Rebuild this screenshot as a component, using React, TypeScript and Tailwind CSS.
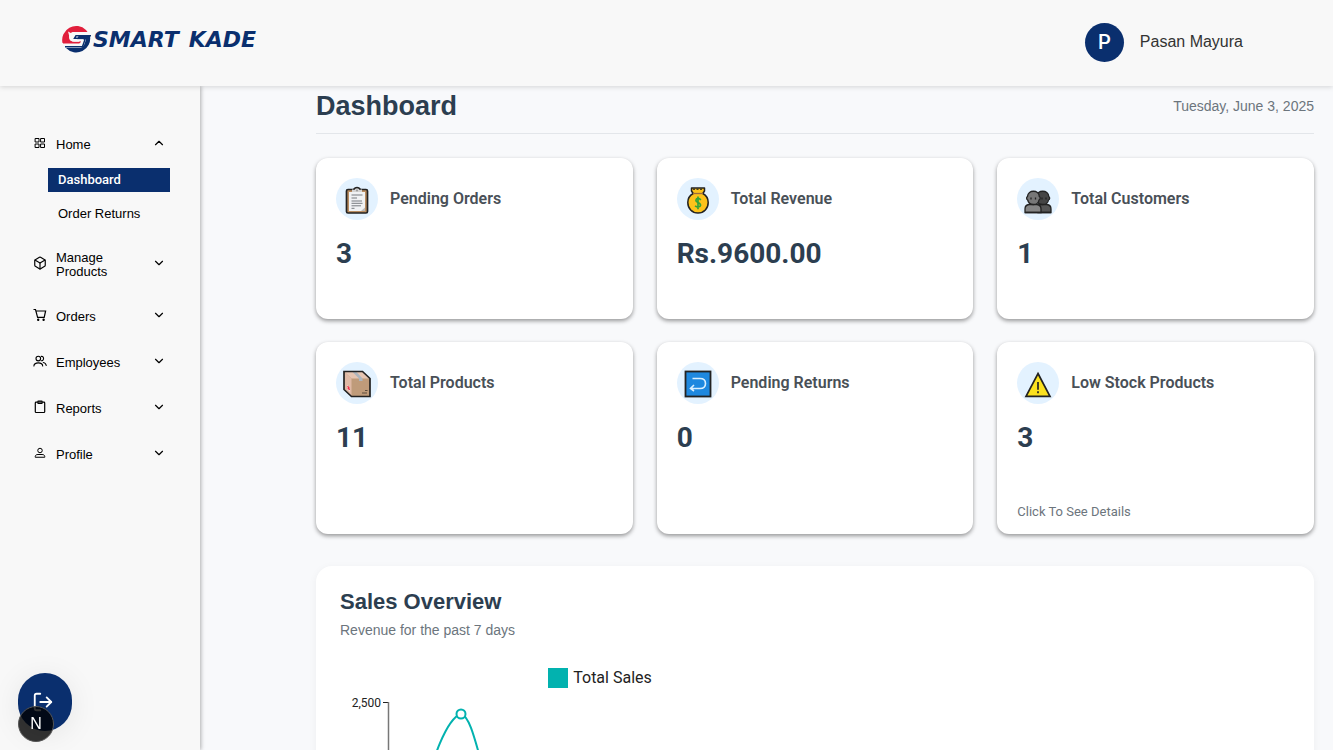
import React from "react";
import { FiGrid, FiBox } from "react-icons/fi";
import { ChevronDown, ChevronUp, LogOut } from "lucide-react";

function LogoMark() {
  return (
    <svg viewBox="0 0 32 30" className="h-[30px] w-8 shrink-0" aria-hidden="true">
      <path d="M1.500 18A14 14 0 0 1 25 5L26.500 7H12Q8 8 8 12Q8 16 12 16.500H20V18Z" fill="#e11f3c" />
      <path d="M5 23H19.500Q22.500 22 23.500 19L25 14.500H16L17.500 11H29A14 14 0 0 1 5 23Z" fill="#0a2f6e" />
      <path d="M31 8.300H13.500Q10 8.300 10 12Q10 15.500 13.500 15.500H20.500L18.500 19.700H1" fill="none" stroke="#f8f8f8" strokeWidth="2.600" />
      <path d="M30 10.700H15L13.500 13.300H22.500Q24.500 13.300 23.500 16L21.500 21.700H4" fill="none" stroke="#0a2f6e" strokeWidth="1.500" />
      <path d="M2 18H18L19.500 16.500" fill="none" stroke="#e11f3c" strokeWidth="1.200" />
      <path d="M7 6.500L12.500 9.500L8.500 12Z" fill="#f8f8f8" />
    </svg>
  );
}

function ProfileIcon() {
  return (
    <svg viewBox="0 0 24 24" className="size-3" fill="none" stroke="currentColor" strokeWidth="2" aria-hidden="true">
      <circle cx="12" cy="7" r="4.500" />
      <path d="M2.500 20.500V19C2.500 16 5.500 15 8 15H16C18.500 15 21.500 16 21.500 19V20.500Z" strokeLinejoin="round" />
    </svg>
  );
}

function CartIcon() {
  return (
    <svg viewBox="0 0 14 14" className="size-3.5" fill="none" stroke="currentColor" strokeWidth="1.200" aria-hidden="true">
      <path d="M0.500 1.500H2.500L4.600 9.300H11.200L12.600 3H3.200" />
      <circle cx="5.200" cy="11.800" r="0.600" fill="currentColor" />
      <circle cx="10.600" cy="11.800" r="0.600" fill="currentColor" />
    </svg>
  );
}

function TeamIcon() {
  return (
    <svg viewBox="0 0 14 14" className="size-3.5" fill="none" stroke="currentColor" strokeWidth="1.100" strokeLinecap="round" aria-hidden="true">
      <circle cx="5.300" cy="4.600" r="2.300" />
      <path d="M8.300 2.400C11.300 2.100 11.300 7 8.300 6.800M0.900 12C1.100 7.800 9.500 7.800 9.700 12M10.300 8.500C12 8.800 13 10 13.200 11.500" />
    </svg>
  );
}

function ReportIcon() {
  return (
    <svg viewBox="0 0 14 14" className="size-3.5" fill="none" stroke="currentColor" strokeWidth="1.200" aria-hidden="true">
      <path d="M4.500 2.200H3.100Q2.300 2.200 2.300 3V11.700Q2.300 12.500 3.100 12.500H10.900Q11.700 12.500 11.700 11.700V3Q11.700 2.200 10.900 2.200H9.500" />
      <rect x="4.800" y="1.200" width="4.400" height="2.200" rx="0.600" fill="#777" />
    </svg>
  );
}

const emoji = "size-[30px]";

function ClipboardArt() {
  return (
    <svg viewBox="0 0 30 30" className={emoji} aria-hidden="true">
      <rect x="4.500" y="4.500" width="21" height="23.500" rx="1.500" fill="#b98d61" stroke="#222" strokeWidth="1.700" />
      <path d="M7 7H23V26H7Z" fill="#f0f2f4" />
      <path d="M19 26L23 22.500V26Z" fill="#b9b9b9" />
      <path d="M10 7V4.500H12.500Q13 2.500 15 2.500Q17 2.500 17.500 4.500H20V7Z" fill="#d5d5d5" />
      <path d="M11.500 4.500Q13 2.500 15 2.500Q17 2.500 18.500 4.500" fill="none" stroke="#222" strokeWidth="1.400" />
      <circle cx="15" cy="5.500" r="1" fill="#999" />
      <path d="M9.500 10H20.500M9.500 13H15M9.500 16H20M9.500 18.300H20.500M9.500 20.800H19M9.500 23.300H12.500" stroke="#777b80" strokeWidth="1" />
    </svg>
  );
}

function MoneyArt() {
  return (
    <svg viewBox="0 0 30 30" className={emoji} aria-hidden="true">
      <path d="M8.500 3H21.500V6L19.800 8.500C23 10.200 25.200 13.500 25.200 17.600C25.200 23.500 21 28 15 28S4.800 23.500 4.800 17.600C4.800 13.500 7 10.200 10.200 8.500L8.500 6Z" fill="#fcc21b" stroke="#222" strokeWidth="1.500" strokeLinejoin="round" />
      <path d="M10 8.500H20" stroke="#9b6a3c" strokeWidth="1.300" />
      <path d="M10 4.300H20" stroke="#222" strokeWidth="1" strokeDasharray="2 1.500" />
      <path d="M17.900 14.800Q15.500 12.600 13.500 14Q11.800 16 15 17.500Q18.700 19.200 17 21.300Q14.500 22.800 12.100 20.800M15 11.500V24.300" fill="none" stroke="#35a33a" strokeWidth="1.700" />
    </svg>
  );
}

function PeopleArt() {
  return (
    <svg viewBox="0 0 30 30" className={emoji} aria-hidden="true">
      <g stroke="#222" strokeWidth="1.300">
        <path d="M15 27.500V22Q15 19.500 18 19.500H24Q28 20 28 24V27.500Z" fill="#555" />
        <path d="M13.500 11.500C14 4.500 25.500 4.500 25.800 11.500C27 12 27 14.500 25.500 15C24.500 21 15 21 13.700 15Z" fill="#454545" />
        <path d="M2 27.500V24Q2 20 6 19.500H14Q18 20 18 24V27.500Z" fill="#858585" />
        <path d="M4.500 11.500C5 4.500 16 4.500 16.300 11.500C17.500 12 17.500 14.500 16 15C15 21 6 21 4.700 15C3.300 14.500 3.300 12 4.500 11.500Z" fill="#777" />
      </g>
      <path d="M2 27.500H28" stroke="#222" strokeWidth="1.500" />
      <path d="M8 12.500V14.500M12.500 12.500V14.500M19 12.500V14.500M23 12.500V14.500" stroke="#222" strokeWidth="1.300" />
    </svg>
  );
}

function PackageArt() {
  return (
    <svg viewBox="0 0 30 30" className={emoji} aria-hidden="true">
      <path d="M2 2.500H20.500L28 9.500V27.500H9.500L2 20.500Z" fill="#bf9b7a" />
      <path d="M2 2.500H20.500L28 9.500H9.500Z" fill="#e6c5b2" />
      <path d="M2 2.500L9.500 9.500V27.500L2 20.500Z" fill="#dfb9a5" />
      <path d="M10 2.500H14L20.500 9.500V12H17V9.500Z" fill="#adb5bd" />
      <path d="M5 16L8 19V23L5 20Z" fill="#f4dfdb" />
      <path d="M5.700 17L7.500 21M7.500 18.500L5.700 20" stroke="#ee3048" strokeWidth="1.300" />
      <path d="M23 21.500H25.500M20 24H25" stroke="#5d4d3d" strokeWidth="1.200" />
      <path d="M2 2.500H20.500L28 9.500V27.500H9.500L2 20.500Z" fill="none" stroke="#222" strokeWidth="1.700" />
    </svg>
  );
}

function ReturnArt() {
  return (
    <svg viewBox="0 0 30 30" className={emoji} aria-hidden="true">
      <rect x="2.500" y="2.500" width="25" height="25" fill="#1e88df" stroke="#222" strokeWidth="1.800" />
      <path d="M9.500 9.500H17Q22.500 9.500 22.500 14.500Q22.500 19.500 17 19.500H8M11 16L7.500 19.500L11 22" fill="none" stroke="#d9efff" strokeWidth="1.600" />
    </svg>
  );
}

function WarningArt() {
  return (
    <svg viewBox="0 0 30 30" className={emoji} aria-hidden="true">
      <path d="M15 4.500L27 27.300H3Z" fill="#fbe11f" stroke="#222" strokeWidth="1.700" />
      <path d="M15 13V20.800M15 22.300V24.300" stroke="#222" strokeWidth="1.700" />
    </svg>
  );
}

function NavItem({ icon, label, open = false, tall = false }: { icon: React.ReactNode; label: string; open?: boolean; tall?: boolean }) {
  return (
    <button type="button" aria-expanded={open} className={`flex w-full items-center text-left ${tall ? "h-[58px]" : "h-[46px]"}`}>
      <span className="flex w-6 shrink-0 items-center pb-1 pl-px">{icon}</span>
      <span className="w-20 text-[13px] leading-[14px]">{label}</span>
      <span className="ml-auto pb-1">
        {open ? <ChevronUp className="size-3.5" strokeWidth={2} /> : <ChevronDown className="size-3.5" strokeWidth={2} />}
      </span>
    </button>
  );
}

const cards = [
  { icon: <ClipboardArt />, label: "Pending Orders", value: "3" },
  { icon: <MoneyArt />, label: "Total Revenue", value: "Rs.9600.00" },
  { icon: <PeopleArt />, label: "Total Customers", value: "1" },
  { icon: <PackageArt />, label: "Total Products", value: "11" },
  { icon: <ReturnArt />, label: "Pending Returns", value: "0" },
  { icon: <WarningArt />, label: "Low Stock Products", value: "3", note: "Click To See Details" },
];

function Card({ icon, label, value, note }: { icon: React.ReactNode; label: string; value: string; note?: string }) {
  return (
    <article className="flex min-h-[161px] flex-col rounded-xl bg-white px-5 pt-5 pb-3 font-['Roboto',sans-serif] shadow-[0_2px_4px_rgba(0,0,0,0.4)]">
      <div className="flex items-center gap-3">
        <div className="flex size-[42px] items-center justify-center rounded-full bg-[#e3f2ff] pt-0.5">{icon}</div>
        <h2 className="text-base font-semibold text-[#495057]">{label}</h2>
      </div>
      <p className="mt-4 text-[28px] leading-9 font-bold text-[#2c3e50]">{value}</p>
      {note && <a href="#low-stock" className="mt-[46px] text-[13px] leading-5 text-[#6c757d]">{note}</a>}
    </article>
  );
}

export default function App() {
  return (
    <div className="flex h-screen flex-col overflow-hidden bg-[#f8f9fb] font-['Liberation_Sans',Arial,sans-serif] text-black">
      <header className="z-20 flex h-[86px] shrink-0 items-center justify-between bg-[#f8f8f8] pr-[90px] pb-0.5 pl-[61px] shadow-[0_1px_5px_rgba(0,0,0,0.15)]">
        <a href="#home" aria-label="Smart Kade" className="flex items-center pb-1 text-[#0a2f6e]">
          <LogoMark />
          <span className="flex gap-2.5 font-['DejaVu_Sans',sans-serif] text-[22px] leading-6 font-bold italic">
            <span>SMART</span>
            <span>KADE</span>
          </span>
        </a>
        <div className="flex items-center gap-4">
          <span className="flex size-[39px] items-center justify-center rounded-full bg-[#0a2f6e] font-['Roboto',sans-serif] text-xl font-medium text-white">P</span>
          <span className="text-base text-[#333]">Pasan Mayura</span>
        </div>
      </header>

      <div className="flex min-h-0 flex-1">
        <aside className="z-10 w-[200px] shrink-0 bg-[#f8f8f8] pt-9 pr-[30px] pl-8 shadow-[1px_0_4px_rgba(0,0,0,0.3)]">
          <nav aria-label="Main">
            <div className="pr-1">
              <NavItem icon={<FiGrid className="ml-px size-3" />} label="Home" open />
            </div>
            <ul className="mb-2.5 ml-4 flex flex-col gap-2.5 text-[13px] leading-6">
              <li><a href="#dashboard" aria-current="page" className="block bg-[#0a2f6e] pl-2.5 font-['Roboto',sans-serif] font-medium text-white">Dashboard</a></li>
              <li><a href="#order-returns" className="block pl-2.5">Order Returns</a></li>
            </ul>
            <div className="pr-1">
              <NavItem icon={<FiBox className="size-3.5" />} label="Manage Products" tall />
              <NavItem icon={<CartIcon />} label="Orders" />
              <NavItem icon={<TeamIcon />} label="Employees" />
              <NavItem icon={<ReportIcon />} label="Reports" />
              <NavItem icon={<span className="ml-px"><ProfileIcon /></span>} label="Profile" />
            </div>
          </nav>
        </aside>

        <main className="min-w-0 flex-1 overflow-y-auto pr-[19px] pb-8 pl-[116px] [scrollbar-width:none]">
          <div className="flex h-12 items-center justify-between border-b border-[#e3e6ea] pb-2">
            <h1 className="text-[27px] leading-9 font-bold text-[#2c3e50]">Dashboard</h1>
            <time dateTime="2025-06-03" className="text-sm text-[#6c757d]">Tuesday, June 3, 2025</time>
          </div>
          <section aria-label="Statistics" className="mt-6 grid grid-cols-3 gap-x-6 gap-y-[23px]">
            {cards.map((card) => <Card key={card.label} {...card} />)}
          </section>

          <section className="mt-8 rounded-2xl bg-white px-6 pt-5 pb-6 shadow-[0_2px_8px_rgba(0,0,0,0.05)]">
            <h2 className="text-[22px] leading-8 font-bold text-[#2c3e50]">Sales Overview</h2>
            <p className="mt-0.5 text-sm leading-5 text-[#6c757d]">Revenue for the past 7 days</p>
            <div className="w-[520px] max-w-full pt-7 font-['Roboto',sans-serif]">
              <div className="flex items-center justify-center gap-[5px] text-base leading-5 text-[#222]">
                <span className="size-5 bg-[#02b2af]" />
                Total Sales
              </div>
              <svg viewBox="0 0 520 230" className="block w-full" role="img" aria-label="Total sales chart">
                <text x="41" y="19" textAnchor="end" fontSize="12" fill="#222">2,500</text>
                <path d="M43 14.500H49" stroke="#222" />
                <path d="M48.500 14V220H510" fill="none" stroke="#777" strokeWidth="1.500" />
                <path d="M49 190C74 160 94 34 121 26C139 30 143 130 192 190L264 220H504" fill="none" stroke="#02b2af" strokeWidth="2" />
                <circle cx="121" cy="26" r="4.500" fill="#fff" stroke="#02b2af" strokeWidth="2" />
              </svg>
            </div>
          </section>
        </main>
      </div>

      <button type="button" aria-label="Log out" className="fixed bottom-[19px] left-[18px] z-30 flex h-[58px] w-[54px] items-center justify-center rounded-full bg-[#0a2f6e] pr-1 text-white shadow-[0_4px_30px_rgba(0,0,0,0.08)]">
        <LogOut className="size-[22px]" strokeWidth={2} />
      </button>
      <button type="button" aria-label="Developer tools" className="fixed bottom-2 left-[18px] z-40 flex size-9 items-center justify-center rounded-full border border-[#555] bg-black/80 text-base text-white">
        N
      </button>
    </div>
  );
}
